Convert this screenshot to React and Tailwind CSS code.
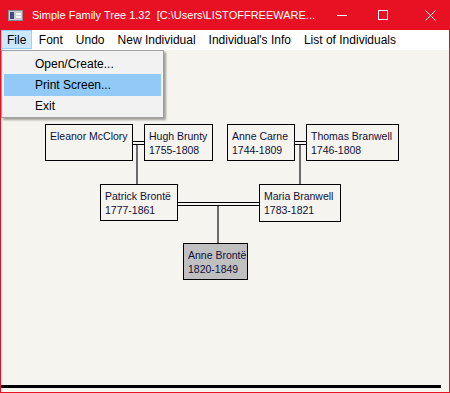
import React from "react";

const people = [
  { name: "Eleanor McClory", years: "", x: 44, y: 74, w: 88, h: 37 },
  { name: "Hugh Brunty", years: "1755-1808", x: 143, y: 74, w: 69, h: 37 },
  { name: "Anne Carne", years: "1744-1809", x: 226, y: 74, w: 68, h: 37 },
  { name: "Thomas Branwell", years: "1746-1808", x: 305, y: 74, w: 93, h: 37 },
  { name: "Patrick Brontë", years: "1777-1861", x: 99, y: 134, w: 78, h: 37 },
  { name: "Maria Branwell", years: "1783-1821", x: 258, y: 134, w: 82, h: 38 },
  { name: "Anne Brontë", years: "1820-1849", x: 182, y: 193, w: 65, h: 37, selected: true },
];

// marriage lines (double) and child lines (single, gray)
const couples = [
  { x: 132, y: 91, w: 11 },
  { x: 294, y: 91, w: 11 },
  { x: 177, y: 152, w: 81 },
];
const drops = [
  { x: 135, y: 95, h: 39 },
  { x: 298, y: 95, h: 39 },
  { x: 216, y: 156, h: 37 },
];

const PersonBox = ({ p }) => (
  <div
    className={`absolute border border-black px-[4px] pt-[4px] text-[10.5px] leading-[14px] text-[#10103a] ${p.selected ? "bg-[#c0c0c0]" : "bg-[#f5f4ee]"}`}
    style={{ left: p.x, top: p.y, width: p.w, height: p.h }}
  >
    <div className="whitespace-nowrap">{p.name}</div>
    {p.years && <div className="whitespace-nowrap">{p.years}</div>}
  </div>
);

const App = () => {
  const menus = ["File", "Font", "Undo", "New Individual", "Individual's Info", "List of Individuals"];

  return (
    <div className="w-[450px] h-[393px] flex flex-col border-x border-b border-[#e81123] overflow-hidden" style={{ fontFamily: '"Liberation Sans", Arial, sans-serif' }}>
      {/* title bar */}
      <div className="h-[30px] -mx-px bg-[#e81123] flex items-center text-white text-[11px] shrink-0">
        <svg width="15" height="11" viewBox="0 0 15 11" className="ml-[8px] shrink-0">
          <rect x="0.5" y="0.5" width="14" height="10" fill="#c9ccd3" stroke="#8a8f99" />
          <rect x="2" y="2" width="4" height="7" fill="#3c4f7a" />
          <rect x="8" y="3" width="5" height="2" fill="#ffffff" />
          <rect x="8" y="6" width="5" height="2" fill="#ffffff" />
        </svg>
        <span className="ml-[9px] whitespace-nowrap min-w-0 overflow-hidden">Simple Family Tree 1.32&nbsp;&nbsp;[C:\Users\LISTOFFREEWARE...</span>
        <div className="ml-auto flex items-center shrink-0">
          <div className="w-[10px] h-px bg-white" />
          <div className="ml-[31px] w-[10px] h-[10px] border border-white" />
          <svg width="11" height="11" viewBox="0 0 11 11" className="ml-[37px] mr-[14px]">
            <path d="M0.5 0.5 L10.5 10.5 M10.5 0.5 L0.5 10.5" stroke="white" strokeWidth="1" />
          </svg>
        </div>
      </div>

      {/* menu bar */}
      <div className="h-[20px] bg-white flex items-start text-[12px] text-black shrink-0">
        {menus.map((m, i) => (
          <div
            key={m}
            className={`h-[19px] flex items-center whitespace-nowrap ${i === 0 ? "px-[5px] bg-[#cce8ff] border border-[#99d1ff]" : "px-[5.5px] border border-transparent"}`}
          >
            {m}
          </div>
        ))}
      </div>

      {/* canvas */}
      <div className="relative flex-1 bg-[#f5f4ee]">
        {couples.map((c, i) => (
          <div key={"c" + i} className="absolute border-y border-black h-[4px]" style={{ left: c.x, top: c.y, width: c.w }} />
        ))}
        {drops.map((d, i) => (
          <div key={"d" + i} className="absolute w-[2px] bg-[#6b6b6b]" style={{ left: d.x, top: d.y, height: d.h }} />
        ))}
        {people.map((p) => (
          <PersonBox key={p.name} p={p} />
        ))}

        <div className="absolute left-0 bottom-[4px] w-[440px] h-[3px] bg-black" />

        {/* File dropdown */}
        <div className="absolute left-0 top-0 w-[163px] bg-[#f2f2f2] border border-[#a0a0a0] shadow-[2px_2px_2px_rgba(0,0,0,0.35)] pt-[2px] pb-[1px] text-[12px] text-black">
          <div className="h-[21px] pl-[33px] flex items-center">Open/Create...</div>
          <div className="h-[22px] mx-[2px] pl-[31px] flex items-center bg-[#91c9f7]">Print Screen...</div>
          <div className="h-[20px] pl-[33px] flex items-center">Exit</div>
        </div>
      </div>
    </div>
  );
};

export default App;
